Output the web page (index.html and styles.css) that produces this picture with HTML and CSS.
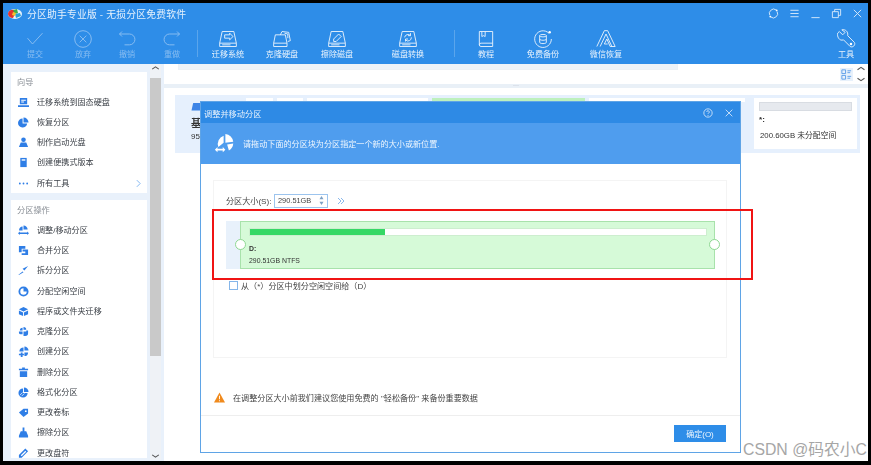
FILE: index.html
```html
<!DOCTYPE html>
<html lang="zh">
<head>
<meta charset="utf-8">
<title>分区助手专业版</title>
<link rel="stylesheet" href="styles.css">
</head>
<body>
<div class="app">
  <header class="top">
    <div class="titlebar">
      <svg class="logo" viewBox="0 0 14 12"><ellipse cx="7" cy="6" rx="7" ry="5" fill="#e9f2fb"/><path d="M0 6c0-3 3-5 6-4l1 4-2 4C2 10 0 8 0 6z" fill="#e5322d"/><path d="M5 2l4-1 1 4-3 1z" fill="#3fae49"/><path d="M7 6l5-1 1 3-5 2z" fill="#2a9fd8"/><path d="M5 4l3 1-1 3-3-1z" fill="#f2c230"/></svg>
      <span class="apptitle">分区助手专业版 - 无损分区免费软件</span>
      <div class="winbtns">
        <svg viewBox="0 0 12 12"><path d="M2 8a4.500 4.500 0 0 1 1-5.500 4.500 4.500 0 0 1 6-.3M10 4a4.500 4.500 0 0 1-1 5.500 4.500 4.500 0 0 1-6 .3"/><circle cx="9.500" cy="2.600" r="1" class="solid"/><circle cx="2.500" cy="9.400" r="1" class="solid"/></svg>
        <svg viewBox="0 0 12 12"><path d="M1.500 2.500h9M1.500 6h9M1.500 9.500h9"/></svg>
        <svg viewBox="0 0 12 12"><path d="M1.500 10.500h9"/></svg>
        <svg viewBox="0 0 12 12"><path d="M1.500 4h6.500v6.500H1.500zM4 4V1.500h6.500V8H8"/></svg>
        <svg viewBox="0 0 12 12"><path d="M2 2l8 8M10 2l-8 8"/></svg>
      </div>
    </div>
    <nav class="toolbar">
      <a class="tool off w-a"><svg viewBox="0 0 24 24"><path d="M3 11l6 7L21 5"/></svg><span>提交</span></a>
      <a class="tool off w-b"><svg viewBox="0 0 24 24"><circle cx="12" cy="12" r="10"/><path d="M8 8l8 8M16 8l-8 8"/></svg><span>放弃</span></a>
      <a class="tool off w-c"><svg viewBox="0 0 24 24"><path d="M3 6h12a6 6 0 0 1 0 13H9M6 3L3 6l3 3"/></svg><span>撤销</span></a>
      <a class="tool off w-d"><svg viewBox="0 0 24 24"><path d="M21 6H9a6 6 0 0 0 0 13h6M18 3l3 3-3 3"/></svg><span>重做</span></a>
      <i class="vsep s1"></i>
      <a class="tool w-e"><svg viewBox="0 0 24 24"><path d="M5 3h14l3 14H2zM2 17v4h20v-4M5 19h10"/><path d="M8 7h6V5l4 4-4 4v-2H8z"/></svg><span>迁移系统</span></a>
      <a class="tool w-f"><svg viewBox="0 0 24 24"><path d="M4 7h12l2 10H2zM2 17v4h16v-4"/><path d="M10 7l2-4 8 1 2 10-3 1M15 5l4 1v5"/></svg><span>克隆硬盘</span></a>
      <a class="tool w-g"><svg viewBox="0 0 24 24"><path d="M5 3h14l3 14H2zM2 17v4h20v-4M5 19h10"/><path d="M8 12l6-6 3 3-6 6H8z"/></svg><span>擦除磁盘</span></a>
      <a class="tool w-h"><svg viewBox="0 0 24 24"><path d="M5 3h14l3 14H2zM2 17v4h20v-4M5 19h10"/><path d="M8 10a4 4 0 0 1 7-2M16 10a4 4 0 0 1-7 3M15 5v3h-3M9 15v-3h3"/></svg><span>磁盘转换</span></a>
      <i class="vsep s2"></i>
      <a class="tool w-i"><svg viewBox="0 0 24 24"><path d="M4 19V3h16v18H6a2 2 0 0 1-2-2 2 2 0 0 1 2-2h14M7 3v6l2-1 2 1V3"/></svg><span>教程</span></a>
      <a class="tool w-j"><svg viewBox="0 0 24 24"><path d="M19 5a10 10 0 1 0 3 7"/><ellipse cx="12" cy="8" rx="4" ry="1.500"/><path d="M8 8v8c0 2 8 2 8 0V8M8 12c0 2 8 2 8 0"/><circle cx="20" cy="4" r="1.500" class="solid"/></svg><span>免费备份</span></a>
      <a class="tool w-k"><svg viewBox="0 0 24 24"><path d="M1 21L10 2h4l9 19h-6l-4-9-3 6h4M5 21l7-15 7 15"/></svg><span>微信恢复</span></a>
      <a class="tool w-l"><svg viewBox="0 0 24 24"><path d="M4 3l4 4 3-3-4-3c4-1 8 2 7 7l8 8c2 3-2 7-5 5l-8-8C4 15 1 9 2 5z"/><circle cx="18" cy="18" r="1.500" class="solid"/></svg><span>工具</span></a>
    </nav>
  </header>

  <div class="body">
    <aside class="side">
      <div class="panels">
        <section class="panel">
          <h3>向导</h3>
          <div class="row"><svg viewBox="0 0 12 12"><path d="M2 1h8v7H2zM0 9h12v2H0z"/><path d="M3.500 3h5v1h-5zM3.500 5h3v1h-3z" fill="#fff"/></svg><span>迁移系统到固态硬盘</span></div>
          <div class="row"><svg viewBox="0 0 12 12"><path d="M6 .5A5.500 5.500 0 0 1 11.500 6H6zM5 1.500V7h5A5 5 0 1 1 5 1.500z"/></svg><span>恢复分区</span></div>
          <div class="row"><svg viewBox="0 0 12 12"><circle cx="6" cy="3" r="2.500"/><path d="M3 6h6l2 5H1z"/></svg><span>制作启动光盘</span></div>
          <div class="row"><svg viewBox="0 0 12 12"><path d="M2.500 1h7v10h-7z"/><path d="M4 2.500h4v1.500H4z" fill="#fff"/></svg><span>创建便携式版本</span></div>
          <div class="row"><svg viewBox="0 0 12 12"><circle cx="2" cy="6" r="1"/><circle cx="6" cy="6" r="1"/><circle cx="10" cy="6" r="1"/></svg><span>所有工具</span><svg class="more" viewBox="0 0 6 10"><path d="M1 1l4 4-4 4" fill="none" stroke="#6ba9ef" stroke-width="1"/></svg></div>
        </section>
        <section class="panel fill">
          <h3>分区操作</h3>
          <div class="row"><svg viewBox="0 0 12 12"><path d="M6 .5a4.500 4.500 0 0 1 4.500 4.500H6zM5 1.500V6H1.200A4 4 0 0 1 5 1.500zM0 9l2-2v1.200h8V7l2 2-2 2V9.800H2V11z"/></svg><span>调整/移动分区</span></div>
          <div class="row"><svg viewBox="0 0 12 12"><path d="M1 1h7v3H4v4H1zM5 5h6v6H4V9h4V7H5z"/></svg><span>合并分区</span></div>
          <div class="row"><svg viewBox="0 0 12 12"><path d="M11 1L7 6 5 4zM5 7l1 1-5 3-.500-.500z"/></svg><span>拆分分区</span></div>
          <div class="row"><svg viewBox="0 0 12 12"><path d="M6 .5a5.500 5.500 0 1 1-5.500 5.500 5.500 5.500 0 0 1 5.500-5.500zm0 2A3.500 3.500 0 1 0 9.500 6H6z" fill-rule="evenodd"/></svg><span>分配空闲空间</span></div>
          <div class="row"><svg viewBox="0 0 12 12"><path d="M6 1l5 2.500L6 6 1 3.500zM1 5l4.500 2v4L1 9zM11 5v4l-4.500 2V7z"/></svg><span>程序或文件夹迁移</span></div>
          <div class="row"><svg viewBox="0 0 12 12"><path d="M6 1a3 3 0 0 1 3 3H6zM5 2v3H2a3 3 0 0 1 3-3zM9 5h2v3a3 3 0 0 1-3 3H6V6h3zM1 6h4v3H3a2 2 0 0 1-2-2z"/></svg><span>克隆分区</span></div>
          <div class="row"><svg viewBox="0 0 12 12"><path d="M7 .5a4.500 4.500 0 0 1 4.500 4.500H7zM6 1.500V6H1.500A4.500 4.500 0 0 1 6 1.500zM7 7h4a4 4 0 0 1-4 4zM3 7h2v1.500h1.500V10H5v2H3v-2H1V8.500h2z"/></svg><span>创建分区</span></div>
          <div class="row"><svg viewBox="0 0 12 12"><path d="M4.500 .5h3V2H11v1.500H1V2h3.500zM2 4.500h8V11H2z"/></svg><span>删除分区</span></div>
          <div class="row"><svg viewBox="0 0 12 12"><path d="M6.500.5a5 5 0 0 1 5 5h-5zM5.500 1.500v5h5a5 5 0 1 1-5-5z"/><path d="M2 9l3-3M4 10l3-3" stroke="#fff" stroke-width=".8"/></svg><span>格式化分区</span></div>
          <div class="row"><svg viewBox="0 0 12 12"><path d="M1 6l5-4h5v5l-5 4z"/><circle cx="8.500" cy="4.500" r="1" fill="#fff"/></svg><span>更改卷标</span></div>
          <div class="row"><svg viewBox="0 0 12 12"><path d="M5 .5h2v4h2l2 5v2H1v-2l2-5h2z"/></svg><span>擦除分区</span></div>
          <div class="row"><svg viewBox="0 0 12 12"><path d="M8 .5l3 3-7 7H1v-3zM8 3L3 8l1 1 5-5z" fill-rule="evenodd"/></svg><span>更改盘符</span></div>
        </section>
      </div>
      <div class="scroll">
        <svg viewBox="0 0 10 6"><path d="M2 4l3-2 3 2"/></svg>
        <div class="thumb"></div>
        <svg viewBox="0 0 10 6"><path d="M2 2l3 2 3-2"/></svg>
      </div>
    </aside>

    <main class="main">
      <div class="strip">
        <div class="stripbox"></div>
        <svg class="viewicon" viewBox="0 0 14 14"><path d="M2 2h4v4H2zM2 8h4v4H2zM8 3h4M8 5h3M8 9h4M8 11h3"/></svg>
        <div class="arrows">
          <svg viewBox="0 0 10 6"><path d="M2 4l3-2 3 2"/></svg>
          <svg viewBox="0 0 10 6"><path d="M2 2l3 2 3-2"/></svg>
        </div>
      </div>
      <div class="splitter"><span>···</span></div>
      <div class="disk">
        <div class="basic">
          <svg viewBox="0 0 12 12"><path d="M2 0h9v9H0z"/></svg>
          <b>基</b>
          <span>95</span>
        </div>
        <div class="cards">
          <div class="thin w1"></div>
          <div class="thin w2"></div>
          <div class="thin w3"></div>
          <div class="thin w4"></div>
          <div class="thin w5"></div>
          <div class="free">
            <div class="freebar"></div>
            <p>*:</p>
            <p>200.60GB 未分配空间</p>
          </div>
        </div>
      </div>
    </main>
  </div>

  <div class="dialog">
    <div class="dtitle">
      <span>调整并移动分区</span>
      <svg class="dhelp" viewBox="0 0 12 12"><circle cx="6" cy="6" r="5"/><path d="M4.500 4.800a1.500 1.500 0 1 1 2.200 1.300c-.5.3-.7.6-.7 1.200M6 8.500v1"/></svg>
      <svg class="dclose" viewBox="0 0 12 12"><path d="M2 2l8 8M10 2l-8 8"/></svg>
    </div>
    <div class="banner">
      <svg viewBox="0 0 24 24"><path d="M13 1a10 10 0 0 1 9 9l-9 1zM11 3v8l-6 5A10 10 0 0 1 11 3zM15 13l7-1a10 10 0 0 1-5 8zM1 19l3-3v2h6v-2l3 3-3 3v-2H4v2z"/></svg>
      <span>请拖动下面的分区块为分区指定一个新的大小或新位置.</span>
    </div>
    <div class="dbody">
      <div class="box">
        <div class="sizeline">
          <label>分区大小(S):</label>
          <div class="spin"><span>290.51GB</span><svg viewBox="0 0 6 11"><path d="M3 0l2.500 4h-5zM3 11L.5 7h5z"/></svg></div>
          <svg class="dbl" viewBox="0 0 8 8"><path d="M1 1l3 3-3 3M4 1l3 3-3 3"/></svg>
        </div>
        <div class="track">
          <div class="part">
            <div class="bar"><div class="used"></div></div>
            <b>D:</b>
            <span>290.51GB NTFS</span>
            <i class="knob left"></i>
            <i class="knob right"></i>
          </div>
        </div>
        <label class="check"><i></i><span>从（*）分区中划分空闲空间给（D）</span></label>
      </div>
      <div class="warn">
        <svg viewBox="0 0 12 12"><path d="M6 .5L12 11.500H0z" fill="#f08a1d"/><path d="M5.500 4h1v4h-1zM5.500 9h1v1h-1z" fill="#fff"/></svg>
        <span>在调整分区大小前我们建议您使用免费的 "轻松备份" 来备份重要数据</span>
      </div>
    </div>
    <div class="dfoot"><button class="ok">确定(O)</button></div>
  </div>

  <div class="redmark"></div>
</div>
<div class="watermark">CSDN @码农小C</div>
</body>
</html>
```
FILE: styles.css
```css
* { box-sizing: border-box; }
html, body { margin: 0; height: 100%; }
body {
  background: #000;
  overflow: hidden;
  position: relative;
  width: 871px;
  height: 465px;
  font-family: "Liberation Sans", "Noto Sans CJK SC", sans-serif;
  font-size: 8.1px;
  color: #333;
}
.app {
  position: absolute;
  left: 3px;
  top: 3px;
  width: 865px;
  height: 458px;
  display: flex;
  flex-direction: column;
  background: #e9f1fb;
  overflow: hidden;
  filter: blur(.35px);
}
.top { background: #2e8de8; height: 61px; flex: none; color: #fff; }
.titlebar { height: 21px; display: flex; align-items: center; padding: 0 5px 0 5px; }
.logo { width: 14px; height: 12px; margin-right: 5px; }
.apptitle { font-size: 9.800px; color: #e4f0fc; letter-spacing: .02em; }
.winbtns { margin-left: auto; display: flex; gap: 10px; }
.winbtns svg { width: 11px; height: 11px; fill: none; stroke: #dcebfb; stroke-width: 1; }
.winbtns .solid { fill: #fff; stroke: none; }
.toolbar { display: flex; height: 40px; align-items: flex-start; padding-top: 5px; }
.tool { display: flex; flex-direction: column; align-items: center; flex: none; color: #e8f2fc; }
.tool svg { width: 20px; height: 20px; fill: none; stroke: #eaf3fc; stroke-width: 1.100; }
.tool .solid { fill: #fff; stroke: none; }
.tool span { margin-top: 0; line-height: 11px; white-space: nowrap; }
.tool.off { color: #86bcf1; }
.tool.off svg { stroke: #8dc0f2; }
.w-a { margin-left: 12px; width: 40px; }
.w-b { margin-left: 8px; width: 40px; }
.w-c { margin-left: 4px; width: 40px; }
.w-d { margin-left: 5px; width: 40px; }
.w-e { margin-left: 10px; width: 40px; }
.w-f { margin-left: 14px; width: 40px; }
.w-g { margin-left: 15px; width: 40px; }
.w-h { margin-left: 31px; width: 40px; }
.w-i { margin-left: 11px; width: 40px; }
.w-j { margin-left: 17px; width: 40px; }
.w-k { margin-left: 23px; width: 40px; }
.w-l { margin-left: auto; margin-right: 2px; width: 40px; }
.vsep { width: 1px; height: 27px; background: #5aa5ec; flex: none; margin-top: 1px; }
.s1 { margin-left: 5px; }
.s2 { margin-left: 26px; }

.body { flex: 1; display: flex; min-height: 0; }
.side { width: 158px; flex: none; display: flex; padding: 0 3px 3px 8px; gap: 3px; }
.panels { width: 136px; padding-top: 8px; display: flex; flex-direction: column; gap: 7px; flex: none; }
.panel { background: #fff; padding-right: 6px; overflow: hidden; }
.panel.fill { flex: 1; min-height: 0; }
.panel h3 { margin: 0; height: 20px; line-height: 21px; font-weight: normal; font-size: 8.200px; color: #8a8f96; padding-left: 6px; }
.row { height: 20.250px; display: flex; align-items: center; padding-left: 7px; color: #3c4148; }
.row > svg:first-child { width: 11px; height: 11px; fill: #2f7ee6; margin-right: 8px; flex: none; }
.row span { white-space: nowrap; margin-top: -2px; }
.more { width: 5px; height: 9px; margin-left: auto; }
.scroll { width: 11px; flex: none; display: flex; flex-direction: column; background: #eff2f6; margin-bottom: -2px; }
.scroll svg { width: 11px; height: 8px; fill: none; stroke: #555; stroke-width: 1; flex: none; }
.thumb { height: 278px; background: #c9c9c9; margin: 6px 0 auto; }

.main { flex: 1; background: #fff; margin-left: 3px; display: flex; flex-direction: column; }
.strip { height: 20px; display: flex; align-items: flex-start; padding-left: 14px; flex: none; }
.stripbox { width: 500px; height: 6px; background: #eef3f8; border: 1px solid #edf1f5; border-top: 0; }
.viewicon { width: 13px; height: 13px; margin: 4px 0 0 auto; background: #e8f1fb; fill: none; stroke: #5b9ee8; stroke-width: 1; }
.arrows { display: flex; flex-direction: column; width: 13px; margin-left: 2px; margin-top: 1px; gap: 4px; }
.arrows svg { width: 12px; height: 7px; fill: none; stroke: #555; stroke-width: 1; }
.splitter { height: 4px; background: #e9f0f7; text-align: center; line-height: 4px; font-size: 6px; color: #99a; flex: none; }
.splitter span { display: block; margin-top: -1px; }
.disk { margin: 7px 8px 0 11px; height: 58px; background: #e6f0fd; display: flex; padding: 3px 3px 4px 0; flex: none; overflow: hidden; }
.basic { width: 71px; padding: 5px 0 0 16px; display: flex; flex-direction: column; flex: none; color: #333; }
.basic svg { width: 11px; height: 10px; fill: #3d84e6; }
.basic b { font-size: 10px; line-height: 14px; margin-top: 4px; }
.basic span { font-size: 8px; line-height: 12px; }
.cards { display: flex; flex: 1; gap: 4px; min-width: 0; }
.thin { background: #fff; height: 4px; flex: none; }
.w1 { width: 27px; }
.w2 { width: 26px; }
.w3 { width: 121px; }
.w4 { width: 153px; background: #bdf0bd; }
.w5 { width: 156px; }
.free { width: 103px; height: 51px; background: #fff; padding: 4px 5px; flex: none; margin-left: auto; }
.freebar { height: 9px; background: #e6e9ee; border: 1px solid #d8dce2; }
.free p { margin: 0; line-height: 15px; color: #333; white-space: nowrap; }
.free p:nth-of-type(1) { margin-top: 1px; font-weight: bold; }
.free p:nth-of-type(2) { font-size: 7.800px; margin-left: 1px; margin-top: 1px; }

.dialog {
  position: absolute;
  left: 197px;
  top: 98px;
  width: 541px;
  height: 352px;
  background: #fff;
  border: 1px solid #5fa4e6;
  display: flex;
  flex-direction: column;
}
.dtitle { height: 21px; background: #2e8ae5; color: #e6f1fc; display: flex; align-items: center; padding: 0 6px 0 3px; flex: none; font-size: 8.200px; }
.dhelp, .dclose { width: 10px; height: 10px; fill: none; stroke: #dcebfb; stroke-width: 1; }
.dhelp { margin-left: auto; margin-right: 11px; }
.banner { height: 41px; background: #4f9dee; display: flex; align-items: center; padding-left: 13px; color: #eef6fe; flex: none; }
.banner svg { width: 21px; height: 21px; fill: #fff; margin-right: 8px; }
.dbody { flex: 1; padding: 16px 13px 0 12px; display: flex; flex-direction: column; }
.box { height: 178px; border: 1px solid #f4f4f4; padding: 12px 12px 0 12px; }
.sizeline { display: flex; align-items: center; height: 15px; color: #444; }
.sizeline label { width: 48px; }
.spin { width: 54px; height: 14px; border: 1px solid #9cc4ee; display: flex; align-items: center; justify-content: space-between; padding: 0 3px; font-size: 7.400px; }
.spin svg { width: 5px; height: 9px; fill: #7da0c4; }
.dbl { width: 8px; height: 8px; margin-left: 9px; fill: none; stroke: #8ab8ec; stroke-width: 1; }
.track { height: 48px; background: #e8f1fb; margin: 13px 0 0 0; padding-left: 14px; width: 489px; }
.part { position: relative; height: 48px; width: 475px; background: #d6fad8; border: 1px solid #a8e2ab; padding: 6px 8px 0 8px; display: flex; flex-direction: column; font-size: 6.900px; color: #333; }
.bar { height: 8px; background: #fff; border: 1px solid #cdeecf; width: 458px; flex: none; }
.used { width: 29.600%; height: 100%; background: #36d865; }
.part b { margin-top: 7px; line-height: 12px; }
.part span { line-height: 12px; }
.knob { position: absolute; top: 17px; width: 11px; height: 11px; border-radius: 50%; background: #fff; border: 1px solid #8fd893; }
.knob.left { left: -6px; }
.knob.right { right: -6px; }
.check { display: flex; align-items: center; margin: 11px 0 0 3px; color: #444; }
.check i { width: 9px; height: 9px; border: 1px solid #85b6ea; margin-right: 3px; background: #fff; }
.warn { display: flex; align-items: center; height: 14px; margin-top: 32px; color: #444; }
.warn svg { width: 11px; height: 11px; margin-right: 8px; margin-left: 1px; }
.dfoot { height: 37px; display: flex; justify-content: flex-end; padding: 9px 14px 0 0; flex: none; border-top: 1px solid #eeeeee; }
.ok { width: 52px; height: 17px; background: #2e8de8; border: 0; color: #eef6fe; font: inherit; font-size: 8px; padding: 0; }

.redmark { position: absolute; left: 209px; top: 206px; width: 541px; height: 71px; border: 2px solid #f01414; pointer-events: none; }
.watermark { position: absolute; left: 743px; top: 439px; font-size: 15.800px; line-height: 22px; color: #a6a6a6; white-space: nowrap; }
```
